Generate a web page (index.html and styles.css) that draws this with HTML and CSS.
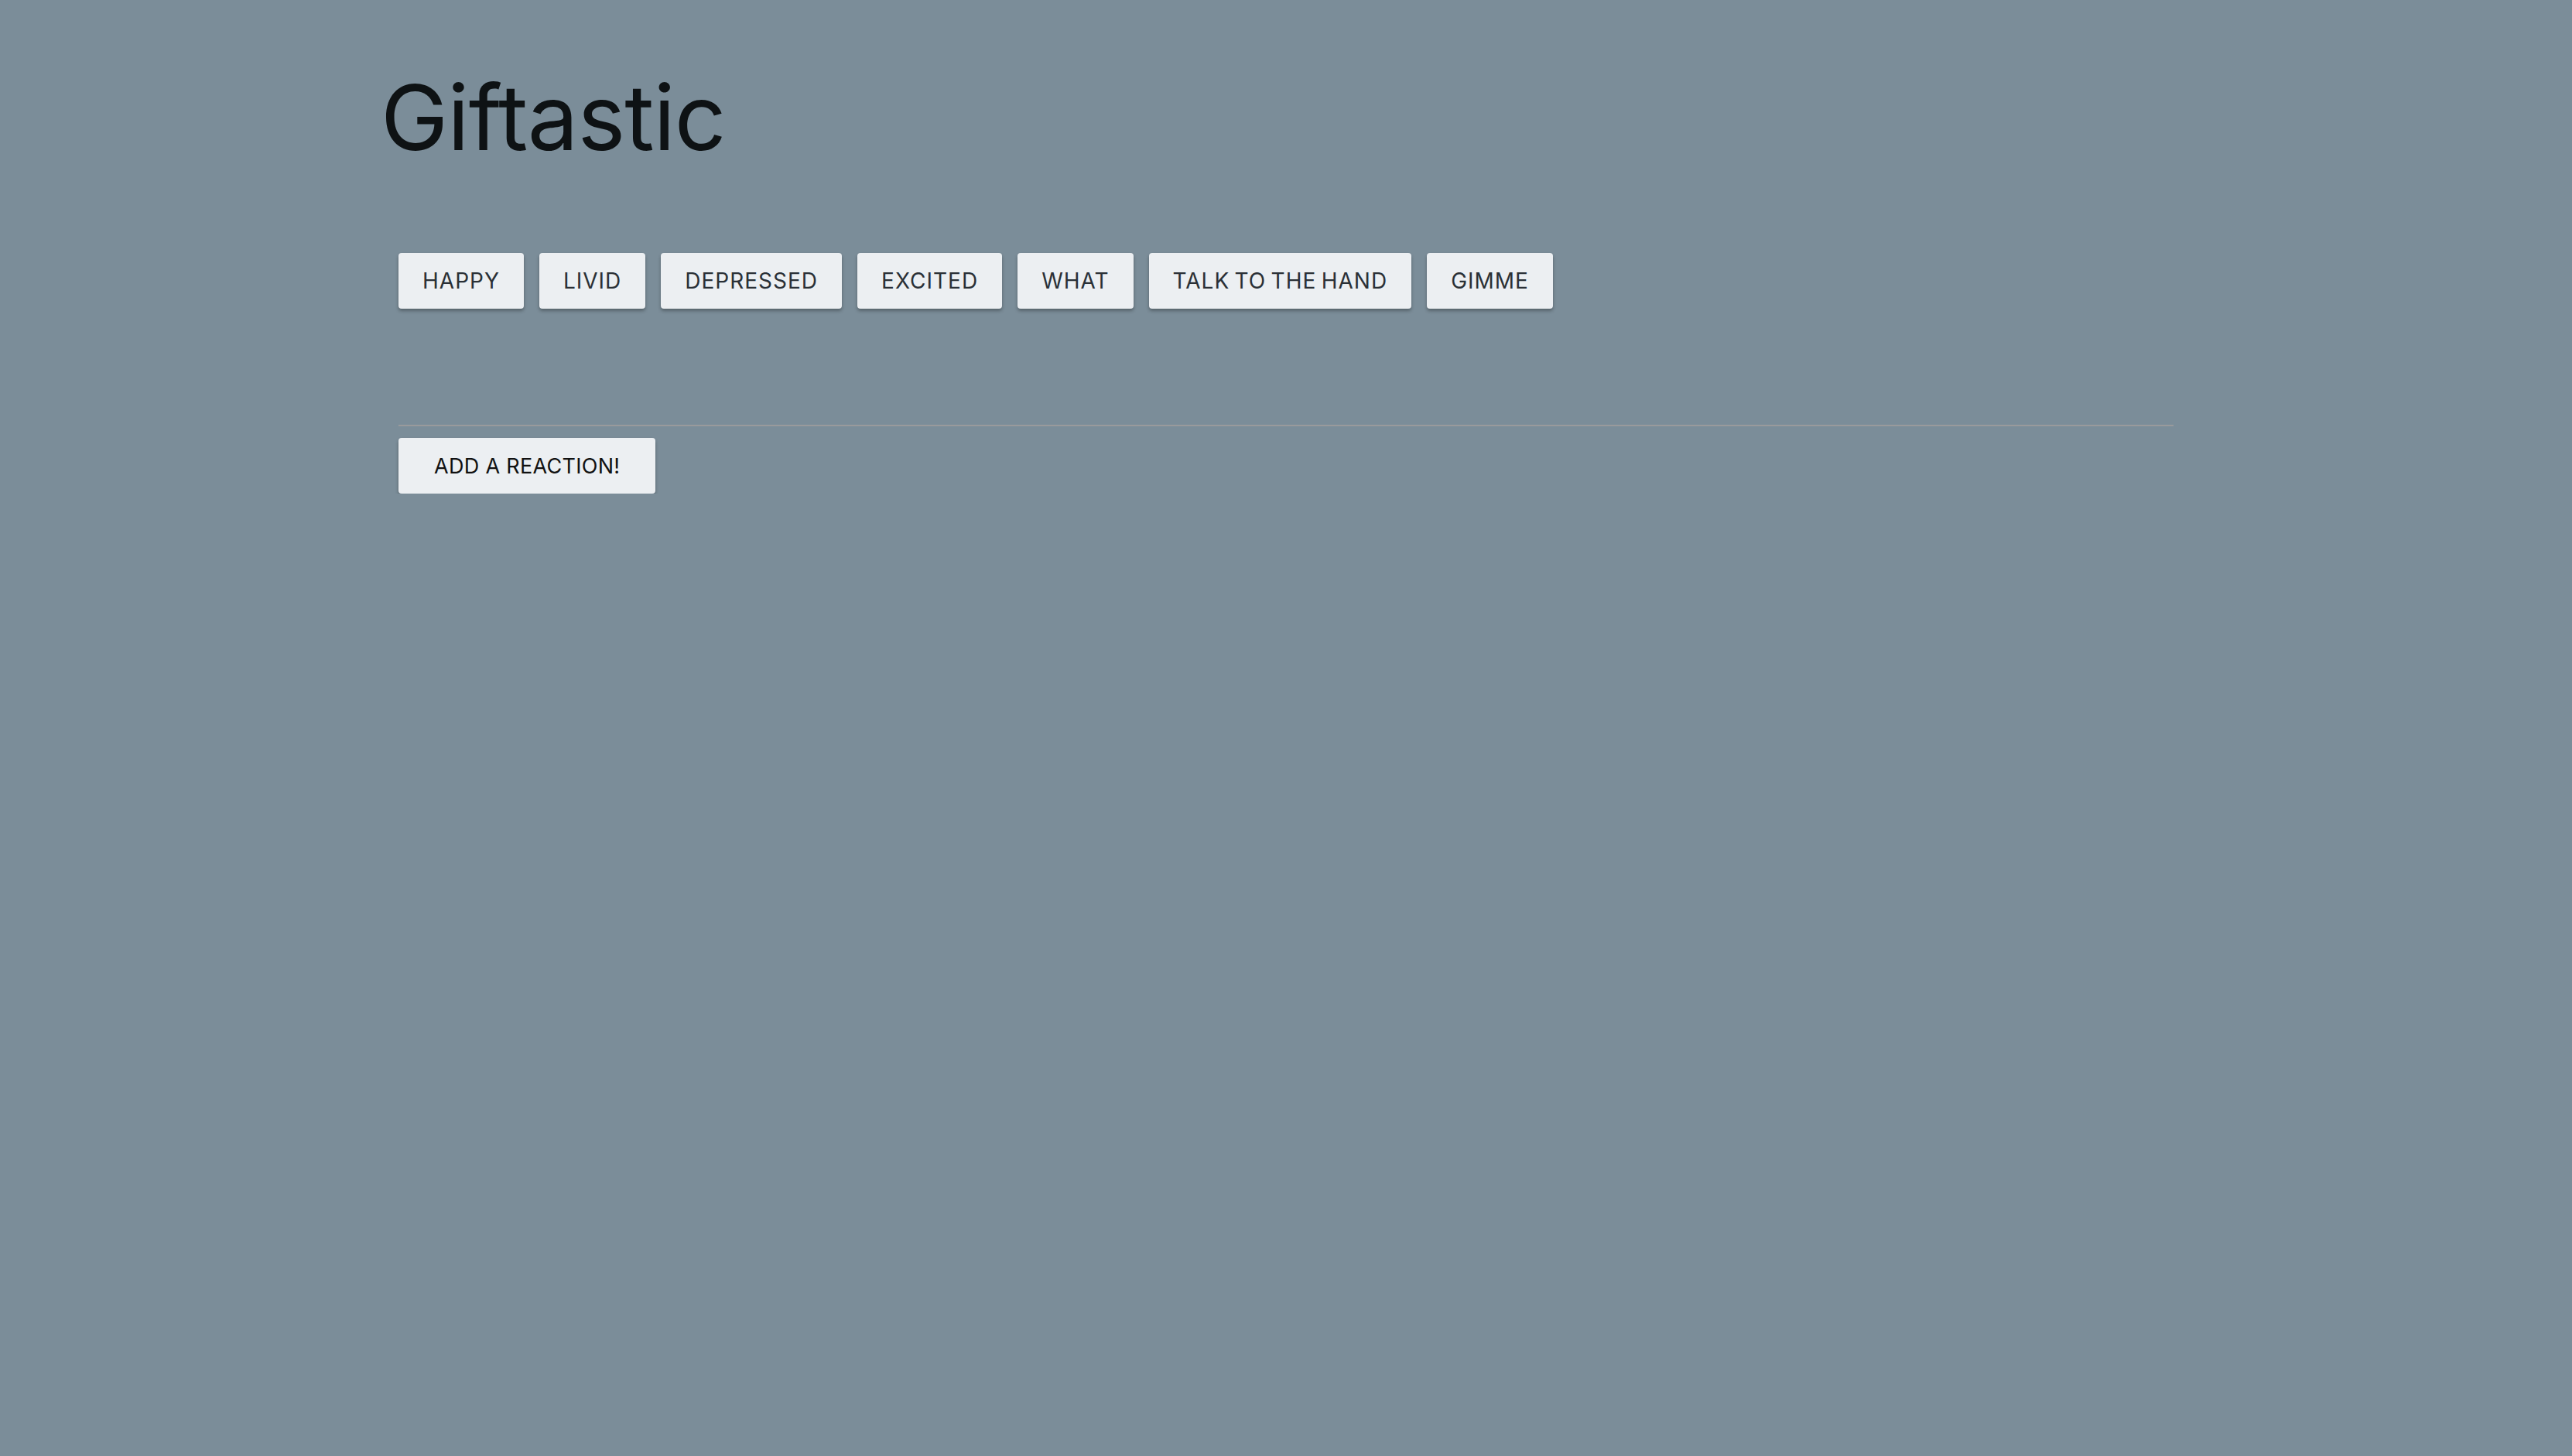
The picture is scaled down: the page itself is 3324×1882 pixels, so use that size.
FILE: index.html
```html
<!DOCTYPE html>
<html lang="en">
<head>
<meta charset="utf-8">
<title>Giftastic</title>
<link rel="stylesheet" href="styles.css">
</head>
<body>
<div class="page">
  <h1 class="title">Giftastic</h1>
  <div class="content">
    <div class="reactions">
      <button class="btn">Happy</button>
      <button class="btn">Livid</button>
      <button class="btn">Depressed</button>
      <button class="btn">Excited</button>
      <button class="btn">What</button>
      <button class="btn">Talk to the hand</button>
      <button class="btn">Gimme</button>
    </div>
    <hr class="divider">
    <button class="btn btn-add">Add a reaction!</button>
  </div>
</div>
</body>
</html>
```

FILE: styles.css
```css
html, body {
  margin: 0;
  padding: 0;
  background: #7b8d99;
  min-height: 100%;
}
body {
  font-family: Inter, "Liberation Sans", sans-serif;
}
.page {
  width: 2352px;
  margin: 0 auto;
  padding-top: 82px;
}
.title {
  margin: 0 0 0 6px;
  font-size: 117px;
  font-weight: 400;
  line-height: 1.2;
  color: #0e1214;
  letter-spacing: -1px;
}
.content {
  margin: 0 29px;
}
.reactions {
  display: flex;
  gap: 20px;
  margin-top: 105px;
  height: 72px;
}
.btn {
  font-family: Inter, "Liberation Sans", sans-serif;
  font-size: 28px;
  text-transform: uppercase;
  letter-spacing: 1px;
  word-spacing: -2.5px;
  color: #2a3036;
  background: #eceff2;
  border: none;
  border-radius: 4px;
  padding: 0 31px;
  height: 72px;
  box-shadow: 0 3px 4px rgba(0, 0, 0, 0.3);
}
.divider {
  margin: 150px 0 0;
  border: none;
  border-top: 2px solid #999a9c;
  height: 0;
}
.btn-add {
  margin-top: 15px;
  color: #111;
  font-size: 27px;
  padding: 0 46px;
  letter-spacing: 0.3px;
  word-spacing: normal;
}
```
